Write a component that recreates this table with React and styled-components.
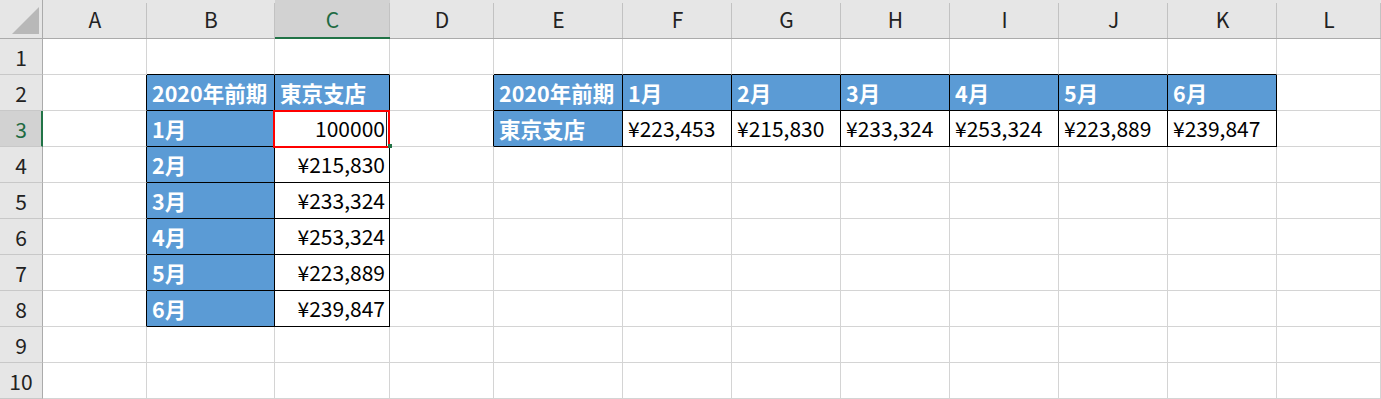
import React from 'react';
import styled, { createGlobalStyle } from 'styled-components';

const GlobalStyle = createGlobalStyle`
  html, body {
    margin: 0;
    padding: 0;
    background: #ffffff;
  }
  body {
    font-family: "Noto Sans CJK JP", "Noto Sans", sans-serif;
  }
`;

const COLUMNS = [
  { key: 'A', w: 104 },
  { key: 'B', w: 128 },
  { key: 'C', w: 115 },
  { key: 'D', w: 104 },
  { key: 'E', w: 129 },
  { key: 'F', w: 109 },
  { key: 'G', w: 109 },
  { key: 'H', w: 109 },
  { key: 'I', w: 109 },
  { key: 'J', w: 109 },
  { key: 'K', w: 109 },
  { key: 'L', w: 104 },
];

const ROW_COUNT = 10;
const ACTIVE = { col: 'C', row: 3 };

const MONTHS = ['1月', '2月', '3月', '4月', '5月', '6月'];
const SALES = ['¥223,453', '¥215,830', '¥233,324', '¥253,324', '¥223,889', '¥239,847'];

// Sheet contents keyed by address
const CELLS = (() => {
  const map = {};
  map.B2 = { text: '2020年前期', fill: true };
  map.C2 = { text: '東京支店', fill: true };
  MONTHS.forEach((m, i) => {
    map[`B${i + 3}`] = { text: m, fill: true };
    map[`C${i + 3}`] = { text: i === 0 ? '100000' : SALES[i], align: 'right' };
  });
  map.E2 = { text: '2020年前期', fill: true };
  map.E3 = { text: '東京支店', fill: true };
  const across = ['F', 'G', 'H', 'I', 'J', 'K'];
  across.forEach((c, i) => {
    map[`${c}2`] = { text: MONTHS[i], fill: true };
    map[`${c}3`] = { text: SALES[i] };
  });
  return map;
})();

const TABLES = [
  { c0: 1, c1: 2, r0: 2, r1: 8 },
  { c0: 4, c1: 10, r0: 2, r1: 3 },
];

const inTable = (ci, r) =>
  TABLES.some((t) => ci >= t.c0 && ci <= t.c1 && r >= t.r0 && r <= t.r1);

const Sheet = styled.div`
  display: grid;
  grid-template-columns: 43px ${COLUMNS.map((c) => `${c.w}px`).join(' ')};
  grid-template-rows: 39px repeat(${ROW_COUNT}, 36px);
  width: 1381px;
  overflow: hidden;
  background: #ffffff;
`;

const Corner = styled.div`
  box-sizing: border-box;
  background: #e6e6e6;
  border-right: 1px solid #ababab;
  border-bottom: 1px solid #ababab;
  display: flex;
  align-items: flex-end;
  justify-content: flex-end;
  padding: 0 3px 4px 0;
`;

const ColHeader = styled.div`
  box-sizing: border-box;
  position: relative;
  background: ${(p) => (p.$active ? '#d2d2d2' : '#e6e6e6')};
  border-bottom: ${(p) => (p.$active ? '2px solid #217346' : '1px solid #ababab')};
  color: ${(p) => (p.$active ? '#1e6b42' : '#222222')};
  font-size: 21px;
  display: flex;
  align-items: center;
  justify-content: center;
  padding-top: ${(p) => (p.$active ? '1px' : '0')};

  &::after {
    content: '';
    position: absolute;
    right: 0;
    top: 3px;
    bottom: 0;
    width: 1px;
    background: #c2c2c2;
  }
`;

const RowHeader = styled.div`
  box-sizing: border-box;
  background: ${(p) => (p.$active ? '#d2d2d2' : '#e6e6e6')};
  border-right: ${(p) => (p.$active ? '2px solid #217346' : '1px solid #ababab')};
  border-bottom: 1px solid #c8c8c8;
  color: ${(p) => (p.$active ? '#1e6b42' : '#222222')};
  font-size: 21px;
  display: flex;
  align-items: center;
  justify-content: center;
  padding-left: ${(p) => (p.$active ? '1px' : '0')};
`;

const Cell = styled.div`
  position: relative;
  box-sizing: border-box;
  border-right: 1px solid ${(p) => (p.$edgeRight ? '#000000' : '#d4d4d4')};
  border-bottom: 1px solid ${(p) => (p.$edgeBottom ? '#000000' : '#d4d4d4')};
  background: ${(p) => (p.$fill ? '#5b9bd5' : '#ffffff')};
  color: ${(p) => (p.$fill ? '#ffffff' : '#000000')};
  font-weight: ${(p) => (p.$fill ? 700 : 400)};
  font-size: ${(p) => (p.$fill ? '21.5px' : '21px')};
  display: flex;
  align-items: center;
  justify-content: ${(p) => (p.$align === 'right' ? 'flex-end' : 'flex-start')};
  padding: 0 4px 1px 5px;
  white-space: nowrap;
`;

const SelectionFrame = styled.div`
  position: absolute;
  left: -2px;
  top: -1px;
  width: 117px;
  height: 38px;
  box-sizing: border-box;
  border: 2px solid #ff0000;
  pointer-events: none;
  z-index: 2;

  &::before {
    content: '';
    position: absolute;
    right: 1px;
    top: 0;
    bottom: 0;
    width: 1px;
    background: #222222;
  }
`;

const FillHandle = styled.div`
  position: absolute;
  right: -3px;
  bottom: -2px;
  width: 4px;
  height: 4px;
  background: #217346;
  z-index: 3;
`;

const CornerMark = () => (
  <svg width="27" height="27" viewBox="0 0 27 27">
    <polygon points="27,0 27,27 0,27" fill="#b8b8b8" />
  </svg>
);

export default function App() {
  const rows = Array.from({ length: ROW_COUNT }, (_, i) => i + 1);
  return (
    <>
      <GlobalStyle />
      <Sheet>
        <Corner>
          <CornerMark />
        </Corner>
        {COLUMNS.map((c) => (
          <ColHeader key={c.key} $active={c.key === ACTIVE.col}>
            {c.key}
          </ColHeader>
        ))}
        {rows.map((r) => (
          <React.Fragment key={r}>
            <RowHeader $active={r === ACTIVE.row}>{r}</RowHeader>
            {COLUMNS.map((c, ci) => {
              const addr = `${c.key}${r}`;
              const data = CELLS[addr] || {};
              const here = inTable(ci, r);
              const isActive = c.key === ACTIVE.col && r === ACTIVE.row;
              return (
                <Cell
                  key={addr}
                  $fill={data.fill}
                  $align={data.align}
                  $edgeRight={here || inTable(ci + 1, r)}
                  $edgeBottom={here || inTable(ci, r + 1)}
                >
                  {data.text}
                  {isActive && (
                    <>
                      <SelectionFrame />
                      <FillHandle />
                    </>
                  )}
                </Cell>
              );
            })}
          </React.Fragment>
        ))}
      </Sheet>
    </>
  );
}
